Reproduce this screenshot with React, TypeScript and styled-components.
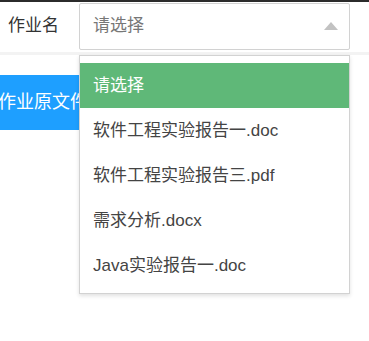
import React, { useState } from "react";
import styled, { createGlobalStyle } from "styled-components";

const GlobalStyle = createGlobalStyle`
  html, body, #root {
    margin: 0;
    padding: 0;
    min-height: 100%;
  }
  html, body {
    height: 100%;
    background: #fff;
    font-family: "Liberation Sans", "Noto Sans CJK SC", sans-serif;
  }
`;

const Page = styled.div`
  min-height: 100vh;
`;

const TopStrip = styled.div`
  height: 2px;
  background: #2b2b2b;
`;

const Header = styled.div`
  display: flex;
  align-items: flex-start;
  height: 53px;
  box-sizing: border-box;
  padding: 1px 0 0 8px;
  border-bottom: 3px solid #f3f3f3;
`;

const Label = styled.label`
  width: 71px;
  flex-shrink: 0;
  font-size: 17px;
  line-height: 46px;
  color: #333;
`;

const SelectWrap = styled.div`
  position: relative;
  width: 271px;
  z-index: 5;
`;

const SelectBox = styled.div`
  height: 47px;
  box-sizing: border-box;
  border: 1px solid #d2d2d2;
  border-radius: 2px;
  padding-left: 13px;
  font-size: 17px;
  line-height: 44px;
  color: #777;
  background: #fff;
`;

const Arrow = styled.span<{ $open: boolean }>`
  position: absolute;
  right: 12px;
  top: 19px;
  width: 0;
  height: 0;
  border-left: 7px solid transparent;
  border-right: 7px solid transparent;
  border-bottom: ${(p) => (p.$open ? "8px solid #c2c2c2" : "0")};
  border-top: ${(p) => (p.$open ? "0" : "8px solid #c2c2c2")};
`;

const Dropdown = styled.dl`
  position: absolute;
  top: 52px;
  left: 0;
  width: 271px;
  box-sizing: border-box;
  margin: 0;
  padding: 7px 0 5px;
  border: 1px solid #d2d2d2;
  background: #fff;
  box-shadow: 0 2px 4px rgba(0, 0, 0, 0.12);
`;

const Option = styled.dd<{ $active?: boolean }>`
  margin: 0;
  height: 45px;
  line-height: 45px;
  padding: 0 13px;
  font-size: 17px;
  white-space: nowrap;
  color: ${(p) => (p.$active ? "#fff" : "#444")};
  background: ${(p) => (p.$active ? "#5fb878" : "transparent")};
`;

const Content = styled.div`
  padding-top: 20px;
`;

const BlueButton = styled.button`
  display: inline-block;
  height: 55px;
  margin-left: -20px;
  padding: 0 18px;
  border: none;
  background: #1e9fff;
  color: #fff;
  font-family: inherit;
  font-size: 18px;
  line-height: 55px;
  white-space: nowrap;
`;

const options = [
  "请选择",
  "软件工程实验报告一.doc",
  "软件工程实验报告三.pdf",
  "需求分析.docx",
  "Java实验报告一.doc",
];

export default function App() {
  const [open] = useState(true);
  const [selected] = useState(0);

  return (
    <Page>
      <GlobalStyle />
      <TopStrip />
      <Header>
        <Label>作业名</Label>
        <SelectWrap>
          <SelectBox>请选择</SelectBox>
          <Arrow $open={open} />
          {open && (
            <Dropdown>
              {options.map((o, i) => (
                <Option key={o} $active={i === selected}>
                  {o}
                </Option>
              ))}
            </Dropdown>
          )}
        </SelectWrap>
      </Header>
      <Content>
        <BlueButton>作业原文件下载</BlueButton>
      </Content>
    </Page>
  );
}
